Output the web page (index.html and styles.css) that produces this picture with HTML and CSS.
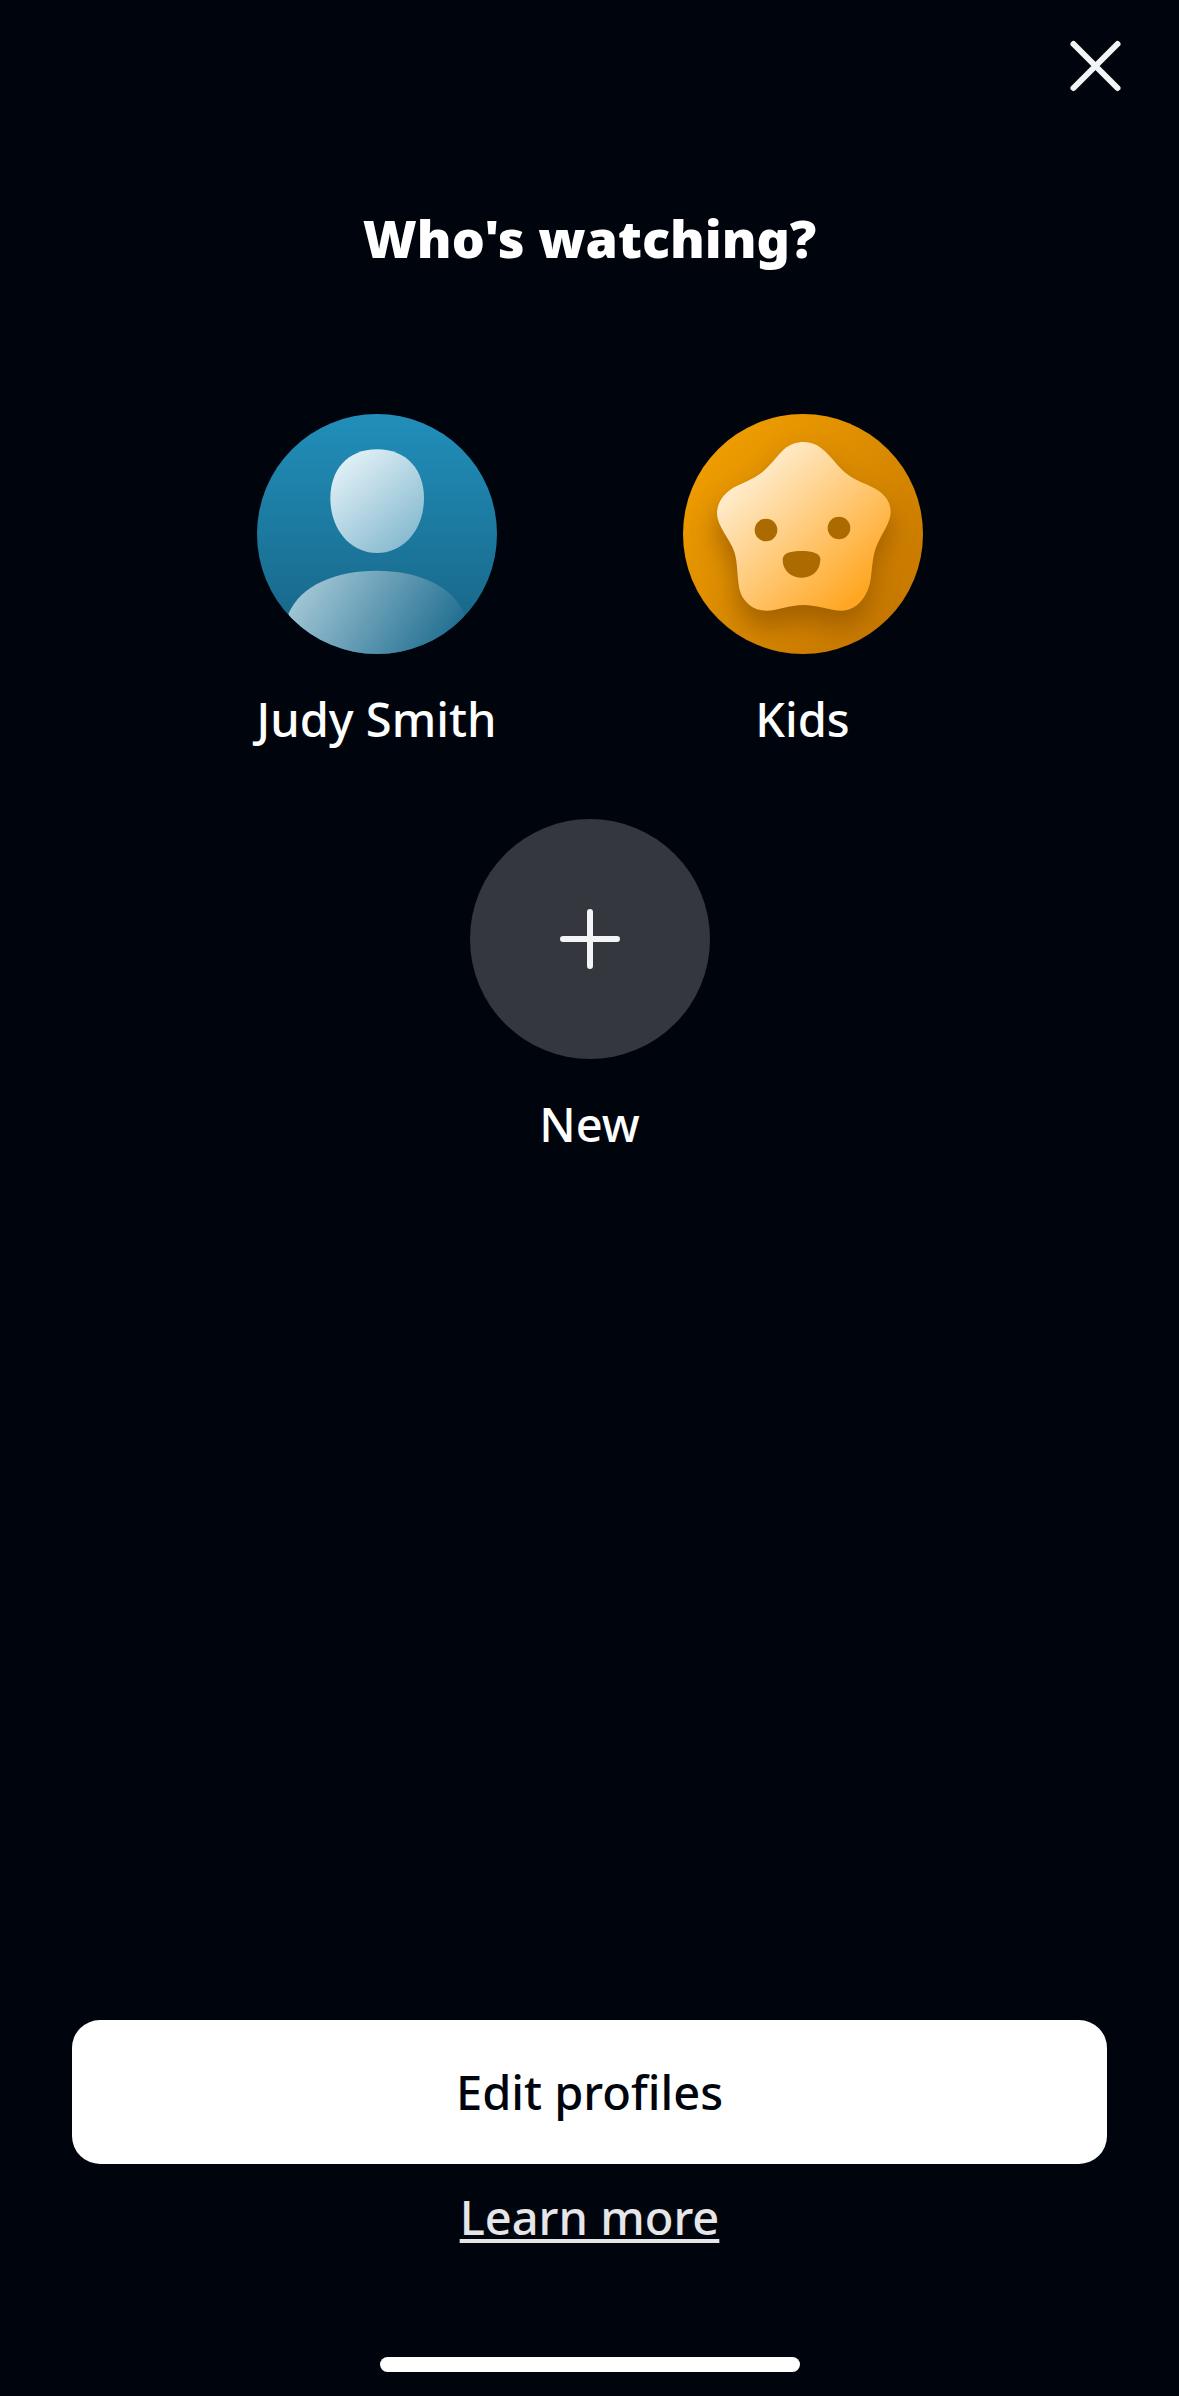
FILE: index.html
```html
<!DOCTYPE html>
<html lang="en">
<head>
    <meta charset="UTF-8">
    <meta name="viewport" content="width=device-width, initial-scale=1.0">
    <title>Who's watching?</title>
    <link rel="stylesheet" href="styles.css">
</head>
<body>
    <div class="screen">
        <!-- Top bar -->
        <header class="top-bar">
            <button type="button" class="btn-close" aria-label="Close">
                <svg viewBox="0 0 60 60" aria-hidden="true">
                    <path d="M8.500 8L52.500 52M52.500 8L8.500 52" />
                </svg>
            </button>
        </header>

        <!-- Profiles -->
        <main class="profiles">
            <h1>Who's watching?</h1>
            <ul class="profile-list">
                <li>
                    <button type="button" class="profile">
                        <svg class="avatar" viewBox="0 0 720 720" aria-hidden="true">
                            <defs>
                                <linearGradient id="blue-bg" x1="0" y1="0" x2="0" y2="1">
                                    <stop offset="0" stop-color="#218fba" />
                                    <stop offset="1" stop-color="#176283" />
                                </linearGradient>
                                <linearGradient id="head" x1="0.1" y1="0.05" x2="0.85" y2="1">
                                    <stop offset="0" stop-color="#e6f3f8" />
                                    <stop offset="1" stop-color="#80b6cd" />
                                </linearGradient>
                                <linearGradient id="body" gradientUnits="userSpaceOnUse" x1="150" y1="500" x2="530" y2="750">
                                    <stop offset="0" stop-color="#a2c6d5" />
                                    <stop offset="1" stop-color="#226f91" />
                                </linearGradient>
                                <clipPath id="round">
                                    <circle cx="360" cy="360" r="360" />
                                </clipPath>
                            </defs>
                            <circle cx="360" cy="360" r="360" fill="url(#blue-bg)" />
                            <path fill="url(#head)" d="M360 106C450 106 501 168 501 253C501 345 442 417 360 417C279 417 220 345 220 253C220 168 271 106 360 106Z" />
                            <path fill="url(#body)" clip-path="url(#round)" d="M95 598C130 515 235 470 359 470C483 470 585 515 622 598V720H95Z" />
                        </svg>
                        <span class="profile-name">Judy Smith</span>
                    </button>
                </li>
                <li>
                    <button type="button" class="profile">
                        <svg class="avatar" viewBox="0 0 720 720" aria-hidden="true">
                            <defs>
                                <linearGradient id="gold-bg" x1="0.1" y1="0.15" x2="0.85" y2="0.85">
                                    <stop offset="0" stop-color="#ee9d00" />
                                    <stop offset="1" stop-color="#c87900" />
                                </linearGradient>
                                <linearGradient id="star" gradientUnits="userSpaceOnUse" x1="190" y1="170" x2="530" y2="540">
                                    <stop offset="0" stop-color="#ffedcf" />
                                    <stop offset="1" stop-color="#ffa723" />
                                </linearGradient>
                                <filter id="star-shadow" x="-30%" y="-30%" width="160%" height="160%">
                                    <feGaussianBlur stdDeviation="40" />
                                </filter>
                                <path id="star-shape" d="M362 84C393 84 414 99 432 118C458 145 468 161 488 177C515 199 545 207 577 224C606 240 623 265 623 293C623 332 587 367 574 417C563 464 568 500 553 531C538 566 509 590 477 590C438 590 405 573 361 573C318 573 287 590 250 590C207 590 174 558 168 518C162 482 164 449 155 416C141 374 102 338 102 298C102 263 126 233 161 216C194 201 215 193 241 172C268 148 283 124 304 105C321 91 340 84 362 84Z" />
                            </defs>
                            <circle cx="360" cy="360" r="360" fill="url(#gold-bg)" />
                            <g clip-path="url(#round)">
                                <use href="#star-shape" y="48" fill="#925400" opacity="0.75" filter="url(#star-shadow)" />
                            </g>
                            <use href="#star-shape" fill="url(#star)" />
                            <g fill="#ac6b00">
                                <circle cx="249" cy="348" r="34" />
                                <circle cx="468" cy="342" r="34" />
                                <path d="M299 437C299 417 323 411 356 411C388 411 412 418 412 436C412 470 388 491 357 491C325 491 299 470 299 437Z" />
                            </g>
                        </svg>
                        <span class="profile-name">Kids</span>
                    </button>
                </li>
                <li>
                    <button type="button" class="profile">
                        <svg class="avatar" viewBox="0 0 240 240" aria-hidden="true">
                            <circle cx="120" cy="120" r="120" fill="#34373d" />
                            <path class="plus" d="M93 120H147M120 93V147" />
                        </svg>
                        <span class="profile-name">New</span>
                    </button>
                </li>
            </ul>
        </main>

        <!-- Bottom actions -->
        <footer class="actions">
            <button type="button" class="btn-edit">Edit profiles</button>
            <a href="#" class="learn-more">Learn more</a>
            <div class="home-bar"></div>
        </footer>
    </div>
</body>
</html>
```
FILE: styles.css
```css
/* General Reset */
* {
    margin: 0;
    padding: 0;
    box-sizing: border-box;
}

body {
    font-family: "Noto Sans", "Open Sans", sans-serif;
    font-size: 47px;
    font-weight: 500;
    font-variant-ligatures: none;
    line-height: 64px;
    background-color: #00050d;
    color: #fff;
}

button {
    font: inherit;
    font-variant-ligatures: none;
    color: inherit;
    background: none;
    border: none;
    cursor: pointer;
}

.screen {
    min-height: 100vh;
    display: flex;
    flex-direction: column;
}

/* Top bar */
.top-bar {
    display: flex;
    justify-content: flex-end;
    padding: 36px 54px;
}

.btn-close,
.btn-close svg {
    display: block;
    width: 60px;
    height: 60px;
}

.btn-close path,
.plus {
    fill: none;
    stroke: #f2f4f6;
    stroke-width: 6;
    stroke-linecap: round;
}

/* Profiles */
.profiles {
    flex: 1;
    padding-top: 70px;
}

.profiles h1 {
    margin-bottom: 140px;
    font-size: 52px;
    font-weight: 900;
    line-height: 72px;
    text-align: center;
}

.profile-list {
    display: flex;
    flex-wrap: wrap;
    justify-content: center;
    row-gap: 68px;
    max-width: 852px;
    margin: 0 auto;
    list-style: none;
}

.profile-list li {
    flex: 0 0 50%;
}

.profile {
    display: flex;
    flex-direction: column;
    align-items: center;
    gap: 33px;
    width: 100%;
}

.avatar {
    width: 240px;
    height: 240px;
}

/* Bottom actions */
.actions {
    display: flex;
    flex-direction: column;
    align-items: center;
    padding: 0 72px 24px;
}

.btn-edit {
    width: 100%;
    margin-bottom: 21px;
    padding: 40px;
    background-color: #fff;
    color: #00050d;
    border-radius: 28px;
}

.learn-more {
    color: #e6e6e8;
    text-decoration-thickness: 4px;
    text-underline-offset: 4px;
}

.home-bar {
    width: 420px;
    height: 15px;
    margin-top: 108px;
    background-color: #fff;
    border-radius: 8px;
}
```
